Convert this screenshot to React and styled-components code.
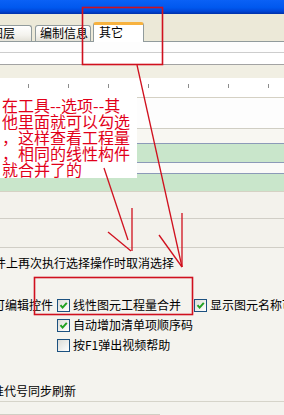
import React from 'react';
import styled, { createGlobalStyle } from 'styled-components';

const GlobalStyle = createGlobalStyle`
  body {
    margin: 0;
    font-family: "Noto Sans CJK SC", "Noto Sans", sans-serif;
    font-size: 12px;
  }
`;

function CheckBox({ checked }) {
  return (
    <Box>
      {checked && (
        <svg width="11" height="11" viewBox="0 0 11 11">
          <path d="M2.5 5.2 L4.6 7.6 L8.8 2.8" fill="none" stroke="#21A121" strokeWidth="2" />
        </svg>
      )}
    </Box>
  );
}

function App() {
  return (
    <Window>
      <GlobalStyle />
      <TitleBar />
      <TabStrip>
        <Tab $w={46} style={{ marginLeft: -14 }}>图层</Tab>
        <Tab $w={56}>编制信息</Tab>
        <Tab $w={51} $active>其它</Tab>
      </TabStrip>
      <Panel>
        <Band $h={11} $bg="#FDFDFD" $line="#CDCDCD" />
        <Band $h={12} $bg="#FFFFFF" $line="#A3A3A3" />
        <Band $h={13} $bg="#F1EFE3" />
        <Ruler>
          {[0, 1, 2, 3, 4, 5, 6].map((i) => (
            <Tick key={i} />
          ))}
        </Ruler>
        <Band $h={31} $bg="#FDFDFD" $line="#D0CEC4" />
        <Band $h={15} $bg="#F8F7F2" $line="#8C9AB8" />
        <Band $h={19} $bg="#C9E6CB" $line="#8C9AB8" />
        <Band $h={11} $bg="#FAFAF8" $line="#8C9AB8" />
        <Band $h={18} $bg="#C9E6CB" $line="#D5D2C4" />
        <Band $h={27} $bg="#F3F2EC" $line="#D0CEC6" />
        <Band $h={29} $bg="#F3F2EC" $line="#D0CEC6" />
        <Options>
          <Line $indent={-6}>件上再次执行选择操作时取消选择</Line>
          <CheckRows>
            <CheckRow>
              <Label style={{ marginLeft: -7 }}>可编辑控件</Label>
              <CheckBox checked />
              <Label $gap={3}>线性图元工程量合并</Label>
              <Spacer $w={13} />
              <CheckBox checked />
              <Label $gap={3}>显示图元名称可见</Label>
            </CheckRow>
            <CheckRow $pad={57}>
              <CheckBox checked />
              <Label $gap={3}>自动增加清单项顺序码</Label>
            </CheckRow>
            <CheckRow $pad={57}>
              <CheckBox />
              <Label $gap={3}>按F1弹出视频帮助</Label>
            </CheckRow>
          </CheckRows>
          <Line $indent={-20} $top={29}>标准代号同步刷新</Line>
          <Divider />
          <GroupEdge />
        </Options>
      </Panel>

      <Note>
        <span>在工具--选项--其</span>
        <span>他里面就可以勾选</span>
        <span>，这样查看工程量</span>
        <span>，相同的线性构件</span>
        <span>就合并了的</span>
      </Note>

      <Marks width="284" height="415" viewBox="0 0 284 415">
        <g fill="none" stroke="#D0101E" strokeWidth="1.3">
          <rect x="82.5" y="7.5" width="80" height="57" strokeWidth="1.6" />
          <rect x="34.5" y="277.5" width="158" height="37" strokeWidth="1.6" />
          <line x1="137" y1="65" x2="182" y2="267" />
          <line x1="182" y1="213" x2="182" y2="267" />
          <line x1="159" y1="235" x2="182" y2="267" />
          <line x1="104" y1="168" x2="128" y2="240" />
          <line x1="132" y1="208" x2="132" y2="251" />
          <line x1="108" y1="232" x2="131" y2="251" />
        </g>
      </Marks>
    </Window>
  );
}

export default App;

const Window = styled.div`
  position: relative;
  width: 284px;
  height: 415px;
  overflow: hidden;
  background: #F4F3EE;
  color: #000;
  white-space: nowrap;
`;

const TitleBar = styled.div`
  height: 14px;
  background: linear-gradient(to bottom, #0A61F6 0%, #0058EE 55%, #0046D8 80%, #0030A8 100%);
`;

const TabStrip = styled.div`
  height: 27px;
  display: flex;
  align-items: flex-end;
  gap: 3px;
  background: #ECE9D8;
`;

const Tab = styled.div`
  position: relative;
  z-index: ${(p) => (p.$active ? 1 : 0)};
  box-sizing: border-box;
  flex: none;
  width: ${(p) => p.$w}px;
  height: ${(p) => (p.$active ? 20 : 16)}px;
  margin-bottom: ${(p) => (p.$active ? -1 : 0)}px;
  margin-left: ${(p) => (p.$active ? -1 : 0)}px;
  padding-left: ${(p) => (p.$active ? 5 : 4)}px;
  border: 1px solid #919B9C;
  border-bottom: none;
  border-top: ${(p) => (p.$active ? '3px solid #F7B23F' : '1px solid #919B9C')};
  border-radius: 3px 3px 0 0;
  background: ${(p) =>
    p.$active ? '#FFFFFF' : 'linear-gradient(to bottom, #FFFFFF, #F4F3EE 60%, #E4E2D8)'};
  font-size: 12px;
  line-height: 14px;
`;

const Panel = styled.div`
  border-top: 1px solid #919B9C;
`;

const Band = styled.div`
  box-sizing: border-box;
  height: ${(p) => p.$h}px;
  background: ${(p) => p.$bg};
  border-bottom: ${(p) => (p.$line ? `1px solid ${p.$line}` : 'none')};
`;

const Ruler = styled.div`
  box-sizing: border-box;
  height: 20px;
  display: flex;
  gap: 39px;
  padding: 6px 0 0 28px;
  background: #FFFFFF;
  border-bottom: 1px solid #D5D1C4;
`;

const Tick = styled.div`
  flex: none;
  width: 1px;
  height: 4px;
  background: #8C8C8C;
`;

const Options = styled.div`
  padding-top: 8px;
  background: #F4F3EE;
`;

const Line = styled.div`
  margin-top: ${(p) => p.$top || 0}px;
  margin-left: ${(p) => p.$indent || 0}px;
  line-height: 14px;
`;

const CheckRows = styled.div`
  margin-top: 25px;
  display: flex;
  flex-direction: column;
`;

const CheckRow = styled.div`
  height: 20px;
  display: flex;
  align-items: center;
  padding-left: ${(p) => p.$pad || 0}px;
`;

const Label = styled.span`
  margin-left: ${(p) => p.$gap || 0}px;
  margin-right: 4px;
  line-height: 14px;
`;

const Spacer = styled.span`
  width: ${(p) => p.$w - 4}px;
  flex: none;
`;

const Box = styled.span`
  box-sizing: border-box;
  flex: none;
  width: 13px;
  height: 13px;
  display: flex;
  align-items: center;
  justify-content: center;
  border: 1px solid #1C5180;
  background: linear-gradient(135deg, #DCDCD7, #FFFFFF);
`;

const Divider = styled.div`
  margin-top: 3px;
  height: 1px;
  background: #D6D4CA;
`;

const GroupEdge = styled.div`
  margin-top: 12px;
  width: 160px;
  height: 1px;
  background: #D0CEC4;
`;

const Note = styled.div`
  position: absolute;
  left: 0;
  top: 94px;
  width: 137px;
  height: 84px;
  box-sizing: border-box;
  padding: 3px 0 0 2px;
  background: #FFFFFF;
  color: #E2001A;
  font-size: 16px;
  line-height: 16px;
  display: flex;
  flex-direction: column;
`;

const Marks = styled.svg`
  position: absolute;
  left: 0;
  top: 0;
  pointer-events: none;
`;
